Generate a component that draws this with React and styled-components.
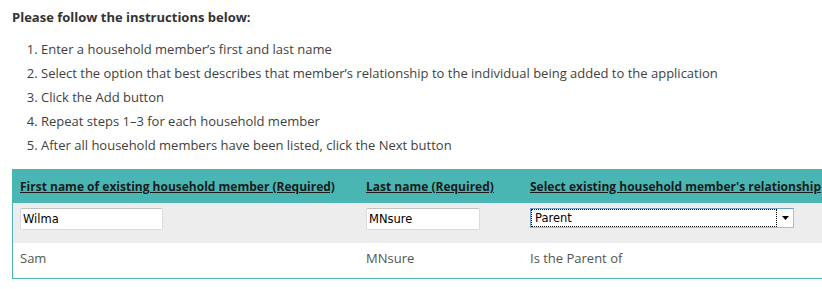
import React, { useState } from "react";
import styled, { createGlobalStyle } from "styled-components";

const GlobalStyle = createGlobalStyle`
  html, body {
    margin: 0;
    padding: 0;
    background: #ffffff;
    overflow: hidden;
  }
`;

const Page = styled.div`
  width: 822px;
  height: 289px;
  overflow: hidden;
  padding: 9px 0 0 12px;
  box-sizing: border-box;
  font-family: "Open Sans", "Liberation Sans", sans-serif;
  color: #3c3c3c;
`;

const Title = styled.h2`
  margin: 0;
  font-size: 13px;
  font-weight: 700;
  line-height: 17px;
  color: #333333;
`;

const Steps = styled.ol`
  margin: 11px 0 0;
  padding: 0 0 0 29px;
  font-size: 13px;
  line-height: 24px;
  color: #3f3f3f;
`;

const Step = styled.li`
  padding-left: 0;
`;

const Table = styled.div`
  margin-top: 12px;
  width: 960px;
  border-left: 1px solid #4ab6b4;
  border-bottom: 1px solid #4ab6b4;
`;

const Row = styled.div`
  display: grid;
  grid-template-columns: 346px 164px 1fr;
  align-items: ${(p) => (p.$top ? "start" : "center")};
  height: ${(p) => p.$height}px;
  padding: ${(p) => p.$pad || "0"};
  background: ${(p) => p.$bg};
  box-sizing: border-box;
`;

const Cell = styled.div`
  padding-left: 7px;
  display: flex;
  align-items: center;
`;

const HeadLabel = styled.span`
  font-size: 12px;
  font-weight: 700;
  color: #1b1b1b;
  text-decoration: underline;
  white-space: nowrap;
`;

const TextBox = styled.input`
  width: ${(p) => p.$width}px;
  height: 22px;
  box-sizing: border-box;
  border: 1px solid #dcdcdc;
  border-top-color: #c4c4c4;
  border-radius: 2px;
  padding: 0 2px;
  font-family: "DejaVu Sans", Verdana, sans-serif;
  font-size: 11.5px;
  color: #000000;
  background: #ffffff;
  outline: none;
`;

const SelectBox = styled.div`
  width: 264px;
  height: 20px;
  box-sizing: border-box;
  border: 1px solid #9cc3e5;
  border-top-color: #6a9fd0;
  border-left-color: #6a9fd0;
  background: #ffffff;
  display: flex;
`;

const SelectValue = styled.div`
  flex: 1;
  border: 1px dotted #000000;
  display: flex;
  align-items: center;
  padding-left: 3px;
  font-family: "DejaVu Sans", Verdana, sans-serif;
  font-size: 11.5px;
  color: #000000;
`;

const SelectArrow = styled.div`
  width: 16px;
  display: flex;
  align-items: center;
  justify-content: center;
`;

const CellText = styled.span`
  font-size: 13px;
  color: #555555;
`;

const members = [{ first: "Sam", last: "MNsure", relation: "Is the Parent of" }];

export default function App() {
  const [first, setFirst] = useState("Wilma");
  const [last, setLast] = useState("MNsure");

  return (
    <Page>
      <GlobalStyle />
      <Title>Please follow the instructions below:</Title>
      <Steps>
        <Step>Enter a household member’s first and last name</Step>
        <Step>
          Select the option that best describes that member’s relationship to
          the individual being added to the application
        </Step>
        <Step>Click the Add button</Step>
        <Step>Repeat steps 1–3 for each household member</Step>
        <Step>After all household members have been listed, click the Next button</Step>
      </Steps>
      <Table>
        <Row $height={34} $bg="#4ab6b4">
          <Cell>
            <HeadLabel>First name of existing household member (Required)</HeadLabel>
          </Cell>
          <Cell>
            <HeadLabel>Last name (Required)</HeadLabel>
          </Cell>
          <Cell>
            <HeadLabel>Select existing household member's relationship</HeadLabel>
          </Cell>
        </Row>
        <Row $height={40} $bg="#ededed" $top $pad="5px 0 0">
          <Cell>
            <TextBox $width={143} value={first} onChange={(e) => setFirst(e.target.value)} />
          </Cell>
          <Cell>
            <TextBox $width={114} value={last} onChange={(e) => setLast(e.target.value)} />
          </Cell>
          <Cell>
            <SelectBox>
              <SelectValue>Parent</SelectValue>
              <SelectArrow>
                <svg width="7" height="4" viewBox="0 0 7 4">
                  <path d="M0 0h7L3.5 4z" fill="#000" />
                </svg>
              </SelectArrow>
            </SelectBox>
          </Cell>
        </Row>
        {members.map((m, i) => (
          <Row key={i} $height={35} $bg="#ffffff" $pad="0 0 5px">
            <Cell>
              <CellText>{m.first}</CellText>
            </Cell>
            <Cell>
              <CellText>{m.last}</CellText>
            </Cell>
            <Cell>
              <CellText>{m.relation}</CellText>
            </Cell>
          </Row>
        ))}
      </Table>
    </Page>
  );
}
